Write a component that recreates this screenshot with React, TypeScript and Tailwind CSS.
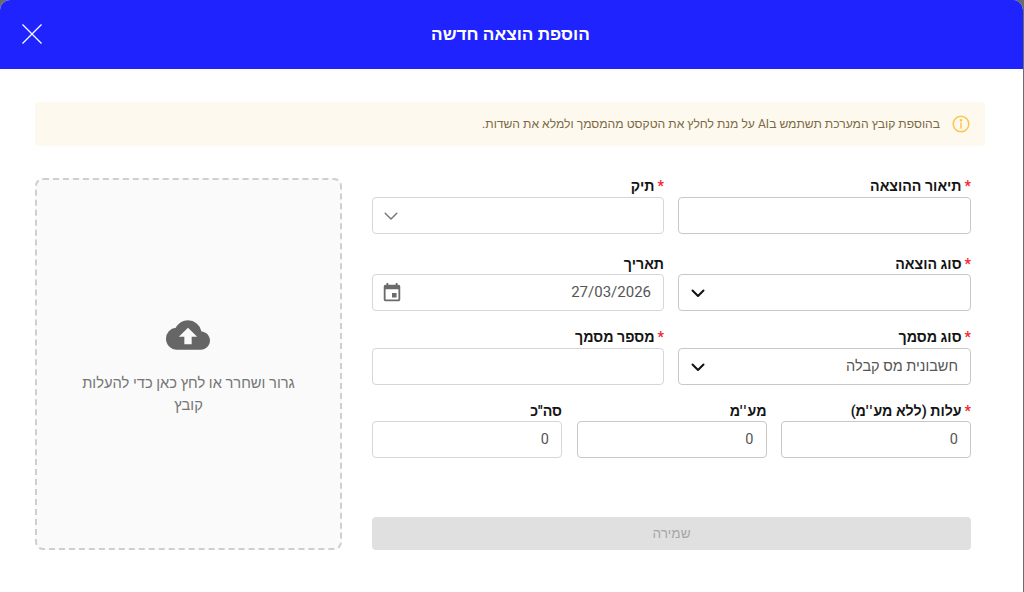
import React from "react";

const font = { fontFamily: "Roboto, 'Liberation Sans', sans-serif" };

function Chevron({ light }: { light?: boolean }) {
  return (
    <svg width="16" height="16" viewBox="0 0 16 16" fill="none" stroke={light ? "#757575" : "#111"} strokeWidth={light ? 1.4 : 2} strokeLinecap="round" strokeLinejoin="round">
      <path d={light ? "M2.2 5.2 8 11 13.8 5.2" : "M2.5 5.5 8 11 13.5 5.5"} />
    </svg>
  );
}

function Field({ label, required, tight, children }: { label: React.ReactNode; required?: boolean; tight?: boolean; children: React.ReactNode }) {
  return (
    <div>
      <div className={`${tight ? "h-[18px]" : "h-[19px]"} text-[14.2px] leading-[17px] font-bold text-[#141414] whitespace-nowrap`}>
        {required && <span className="text-[#f7262d] ml-[3px]">*</span>}
        {label}
      </div>
      {children}
    </div>
  );
}

function Box({ children, dim, pl = "pl-[11px]" }: { children?: React.ReactNode; dim?: boolean; pl?: string }) {
  return (
    <div className={`h-[37px] bg-white border rounded-[4px] pr-3 ${pl} flex items-center justify-between text-[14.5px] text-[#555] ${dim ? "border-[#d6d6d6]" : "border-[#c8c8c8]"}`}>
      {children}
    </div>
  );
}

function Ticks() {
  return <span className="tracking-[1.5px]">''</span>;
}

export default function App() {
  return (
    <div style={font} className="w-[1024px] h-[592px] bg-[#6b6b6b] overflow-hidden">
      <div dir="rtl" className="relative w-[1023px] h-[592px] bg-white rounded-t-[10px] overflow-hidden flex flex-col">
        <header className="h-[69px] shrink-0 bg-[#1f24ff] flex items-center justify-center">
          <div className="text-white text-[17.2px] font-bold translate-x-[-1px]">הוספת הוצאה חדשה</div>
          <svg className="absolute left-[22px] top-[24px]" width="20" height="20" viewBox="0 0 20 20" stroke="#fff" strokeWidth="1.2" fill="none">
            <path d="M0.5 0.5 19.5 19.5M19.5 0.5 0.5 19.5" />
          </svg>
        </header>

        <div className="mt-[33px] mr-[38px] h-[44px] w-[950px] bg-[#fef9ef] rounded-[4px] flex items-center pr-[14px] text-[12.14px] text-[#7a6a45]">
          <svg width="20" height="20" viewBox="0 0 20 20" fill="none" stroke="#fcc44a" strokeWidth="1.5" className="ml-[11px]">
            <circle cx="10" cy="10" r="7.8" />
            <path d="M10 9v5" strokeLinecap="round" />
            <circle cx="10" cy="6.3" r="0.6" fill="#fcc44a" />
          </svg>
          <span>בהוספת קובץ המערכת תשתמש בAI על מנת לחלץ את הטקסט מהמסמך ולמלא את השדות.</span>
        </div>

        <div className="flex mt-[32px] mr-[52px] gap-[30px] flex-1">
          <div className="w-[599px] shrink-0">
            <div className="grid grid-cols-[293px_292px] gap-x-[14px]">
              <Field label="תיאור ההוצאה" required><Box /></Field>
              <Field label="תיק" required>
                <Box dim pl="pl-[10px]"><span /><Chevron light /></Box>
              </Field>
            </div>
            <div className="grid grid-cols-[293px_292px] gap-x-[14px] mt-[22px]">
              <Field label="סוג הוצאה" required tight><Box><span /><Chevron /></Box></Field>
              <Field label="תאריך" tight>
                <Box dim pl="pl-[8px]">
                  <span className="text-[15px] text-[#555]">27/03/2026</span>
                  <svg width="22" height="22" viewBox="0 0 24 24" fill="#6b6b6b">
                    <path d="M17 12h-5v5h5v-5zM16 1v2H8V1H6v2H5c-1.11 0-1.99.9-1.99 2L3 19c0 1.1.89 2 2 2h14c1.1 0 2-.9 2-2V5c0-1.1-.9-2-2-2h-1V1h-2zm3 18H5V8h14v11z" />
                  </svg>
                </Box>
              </Field>
            </div>
            <div className="grid grid-cols-[293px_292px] gap-x-[14px] mt-[18px]">
              <Field label="סוג מסמך" required>
                <Box>
                  <span>חשבונית מס קבלה</span>
                  <Chevron />
                </Box>
              </Field>
              <Field label="מספר מסמך" required><Box dim /></Field>
            </div>
            <div className="grid grid-cols-[190px_190px_190px] gap-x-[14.5px] mt-[18px]">
              <Field label={<>עלות (ללא מע<Ticks />מ)</>} required tight><Box>0</Box></Field>
              <Field label={<>מע<Ticks />מ</>} tight><Box>0</Box></Field>
              <Field label="סה''כ" tight><Box dim>0</Box></Field>
            </div>
            <button className="block mt-[59px] w-full h-[33px] bg-[#e0e0e0] rounded-[4px] text-[13.5px] font-medium text-[#a6a6a6]">שמירה</button>
          </div>

          <div className="w-[307px] h-[372px] bg-[#fafafa] border-2 border-dashed border-[#cfcfcf] rounded-[8px] flex flex-col items-center justify-center px-[40px] text-center text-[14.7px] leading-[22px] text-[#757575]">
            <svg width="44" height="44" viewBox="0 0 24 24" fill="#666" className="mb-[15px] -translate-x-px">
              <path d="M19.35 10.04A7.49 7.49 0 0 0 12 4C9.11 4 6.6 5.64 5.35 8.04A5.994 5.994 0 0 0 0 14c0 3.31 2.69 6 6 6h13c2.76 0 5-2.24 5-5 0-2.64-2.05-4.78-4.65-4.96zM14 13v4h-4v-4H7l5-5 5 5h-3z" />
            </svg>
            <div>גרור ושחרר או לחץ כאן כדי להעלות קובץ</div>
          </div>
        </div>
      </div>
    </div>
  );
}
